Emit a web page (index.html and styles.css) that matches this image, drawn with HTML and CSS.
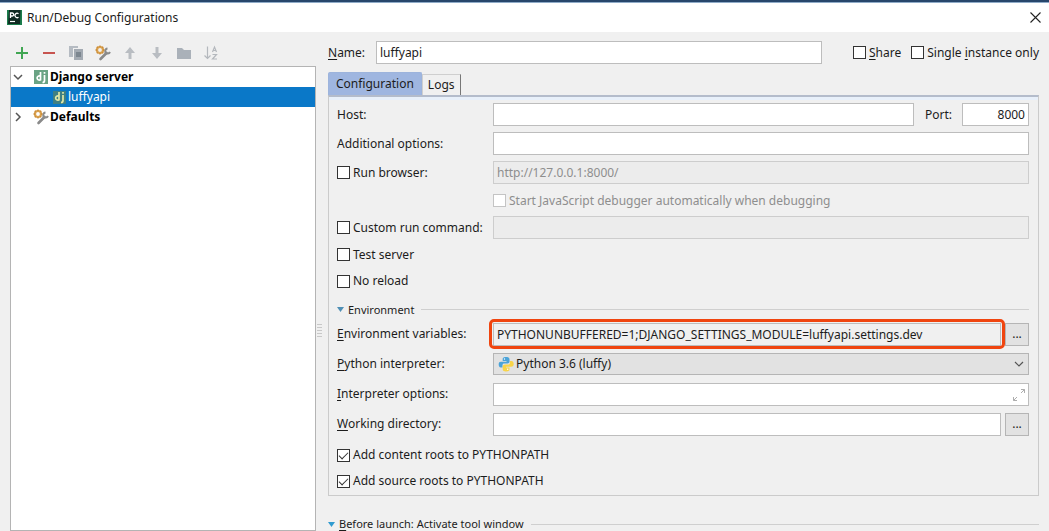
FILE: index.html
```html
<!DOCTYPE html>
<html lang="en">
<head>
<meta charset="utf-8">
<title>Run/Debug Configurations</title>
<link rel="stylesheet" href="styles.css">
</head>
<body>
<svg class="defs" width="0" height="0" aria-hidden="true">
  <symbol id="tools" viewBox="0 0 16 16">
    <path d="M5.500 14 11.500 8" stroke="#8a8a8a" stroke-width="2.600" stroke-linecap="round"/>
    <path d="M12.500 3.500a2.500 2.500 0 1 0 2.500 3.500" stroke="#8b8b8b" stroke-width="2" fill="none"/>
    <circle cx="5" cy="5" r="3" fill="none" stroke="#d9a04c" stroke-width="2.200"/>
    <path d="M5 .5v1.500M5 8v1.500M.5 5H2M8 5h1.500M1.800 1.800l1 1M7.200 7.200l1 1M1.800 8.200l1-1M7.200 2.800l1-1" stroke="#c98a3a" stroke-width="1.300"/>
  </symbol>
</svg>
<div class="dialog">
  <header class="titlebar">
    <svg class="logo" viewBox="0 0 15 15" aria-hidden="true">
      <rect width="15" height="15" fill="#0f2b22"/>
      <path d="M0 0h2L1 15H0zM13.500 0H15v15H0v-1h13z" fill="#1b7d4c"/>
      <path d="M3.500 8V3h1.700a1.500 1.500 0 0 1 0 3H3.500M11.500 3.700a2.200 2.200 0 1 0 0 3.500" fill="none" stroke="#fff" stroke-width="1.300"/>
      <path d="M3 11.500h5" stroke="#fff" stroke-width="1.200"/>
    </svg>
    <h1>Run/Debug Configurations</h1>
    <button class="close" aria-label="Close"><svg viewBox="0 0 11 11"><path d="M.5.5l10 10M10.500.5l-10 10" stroke="#222" stroke-width="1.100"/></svg></button>
  </header>
  <main class="content">
    <aside class="sidebar">
      <div class="toolbar">
        <button aria-label="Add"><svg viewBox="0 0 16 16"><path d="M8 2v12M2 8h12" stroke="#41a653" stroke-width="2"/></svg></button>
        <button aria-label="Remove"><svg viewBox="0 0 16 16"><path d="M2 8h12" stroke="#c75450" stroke-width="2"/></svg></button>
        <button aria-label="Copy"><svg viewBox="0 0 16 16"><path d="M1 1h9v2H5v9H1z" fill="#b5bbc2"/><path d="M6 4h9v11H6z" fill="#a3aab2"/><path d="M8 7h5v5H8z" fill="#7c868f"/></svg></button>
        <button aria-label="Edit defaults"><svg><use href="#tools"/></svg></button>
        <button aria-label="Move up"><svg viewBox="0 0 16 16"><path d="M8 2l5 6H9.500v6h-3V8H3z" fill="#b9bdc2"/></svg></button>
        <button aria-label="Move down"><svg viewBox="0 0 16 16"><path d="M8 14l5-6H9.500V2h-3v6H3z" fill="#b9bdc2"/></svg></button>
        <button aria-label="Create folder"><svg viewBox="0 0 16 16"><path d="M1 3h5l2 2h7v9H1z" fill="#aab1b9"/></svg></button>
        <button aria-label="Sort configurations"><svg viewBox="0 0 16 16"><path d="M4.500 1.500v12M1.500 10.500l3 3 3-3" fill="none" stroke="#b4b8bd" stroke-width="1.200"/><path d="M9.500 7l2-5 2 5M10.200 5.500h2.600M9.500 9.500H13.500L9.500 14H14" fill="none" stroke="#b4b8bd" stroke-width="1.200"/></svg></button>
      </div>
      <ul class="tree">
        <li>
          <svg class="arrow" viewBox="0 0 10 10"><path d="M1 3l4 4 4-4" fill="none" stroke="#555" stroke-width="1.500"/></svg>
          <svg class="icon" viewBox="0 0 16 16"><rect x="1" y="1" width="14" height="14" fill="#6aa384"/><path d="M7.500 3v8.500M7.500 7C3 6 3 12 7.500 11" fill="none" stroke="#fff" stroke-width="1.700"/><path d="M11.500 6v5.500q0 2-2 2M11.500 3v1.700" fill="none" stroke="#fff" stroke-width="1.700"/></svg>
          <b>Django server</b>
        </li>
        <li class="child selected">
          <svg class="icon" viewBox="0 0 16 16"><rect x="2" y="2" width="13" height="13" fill="#3f7f83"/><path d="M8 3v8.500M8 7C3.500 6 3.500 12 8 11" fill="none" stroke="#e1e8a7" stroke-width="1.700"/><path d="M12 6v5.500q0 2-2 2M12 3v1.700" fill="none" stroke="#e1e8a7" stroke-width="1.700"/></svg>
          <span>luffyapi</span>
        </li>
        <li>
          <svg class="arrow" viewBox="0 0 10 10"><path d="M3 1l4 4-4 4" fill="none" stroke="#555" stroke-width="1.500"/></svg>
          <svg class="icon"><use href="#tools"/></svg>
          <b>Defaults</b>
        </li>
      </ul>
    </aside>
    <div class="splitter" aria-hidden="true"><i></i></div>
    <form class="editor">
      <div class="name-row">
        <label for="name"><u>N</u>ame:</label>
        <input id="name" class="field" type="text" value="luffyapi">
        <label class="check"><input type="checkbox"><span><u>S</u>hare</span></label>
        <label class="check"><input type="checkbox"><span>Single <u>i</u>nstance only</span></label>
      </div>
      <div class="tabs" role="tablist">
        <button type="button" class="tab active" role="tab" aria-selected="true">Configuration</button>
        <button type="button" class="tab" role="tab" aria-selected="false">Logs</button>
      </div>
      <section class="panel">
        <div class="row">
          <label class="label" for="host">Host:</label>
          <input id="host" class="field" type="text">
          <label class="port-label" for="port">Port:</label>
          <input id="port" class="field port" type="text" value="8000">
        </div>
        <div class="row">
          <label class="label" for="options">Additional options:</label>
          <input id="options" class="field" type="text">
        </div>
        <div class="row">
          <label class="label check"><input type="checkbox"><span>Run browser:</span></label>
          <input class="field" type="text" aria-label="Browser URL" value="http://127.0.0.1:8000/" disabled>
        </div>
        <div class="row short indent">
          <label class="check muted"><input type="checkbox" disabled><span>Start JavaScript debugger automatically when debugging</span></label>
        </div>
        <div class="row short">
          <label class="label check"><input type="checkbox"><span>Custom run command:</span></label>
          <input class="field" type="text" aria-label="Custom run command" disabled>
        </div>
        <div class="row short"><label class="check"><input type="checkbox"><span>Test server</span></label></div>
        <div class="row tick"><label class="check"><input type="checkbox"><span>No reload</span></label></div>
        <h2 class="group"><svg viewBox="0 0 7 5"><path d="M0 0h7L3.500 5z" fill="#4f8fb5"/></svg>Environment</h2>
        <div class="row">
          <label class="label" for="env"><u>E</u>nvironment variables:</label>
          <span class="marked"><input id="env" class="field readonly" type="text" readonly value="PYTHONUNBUFFERED=1;DJANGO_SETTINGS_MODULE=luffyapi.settings.dev"></span>
          <button type="button" class="browse" aria-label="Edit environment variables">...</button>
        </div>
        <div class="row">
          <label class="label" for="interp"><u>P</u>ython interpreter:</label>
          <span class="combo">
            <svg class="python" viewBox="0 0 16 16" aria-hidden="true"><path d="M8 1C5 1 4.700 2 4.700 3.500V5H8.500v.7H3C1 5.700 .7 7 .7 8.500s.5 3 2.300 3h1.500V9.500C4.500 8 5 7.500 6.500 7.500h3c1 0 2-.7 2-1.700V3.500C11.500 1.500 10 1 8 1z" fill="#4ba3d8"/><path d="M8 15.500c3 0 3.500-1 3.500-2.500v-1.500H8v-.7h5c2 0 2.700-1.200 2.700-2.800S15 5 13.500 5h-1.500v1.500C12 8 11.500 8.500 10 8.500H7C6 8.500 4.700 9.300 4.700 10.500V13c0 1.800 1.300 2.500 3.300 2.500z" fill="#f8d449"/><circle cx="6.500" cy="3" r=".7" fill="#fff"/><circle cx="9.700" cy="13.300" r=".7" fill="#fff"/></svg>
            <select id="interp"><option>Python 3.6 (luffy)</option></select>
            <svg class="chevron" viewBox="0 0 10 10" aria-hidden="true"><path d="M1 3l4 4 4-4" fill="none" stroke="#555" stroke-width="1.200"/></svg>
          </span>
        </div>
        <div class="row">
          <label class="label" for="iopts"><u>I</u>nterpreter options:</label>
          <span class="expandable">
            <input id="iopts" class="field" type="text">
            <svg class="expand" viewBox="0 0 12 12" aria-hidden="true"><path d="M8 .5h3.500V4M11.500.5 8 4M.5 8v3.500H4M.5 11.500 4 8" fill="none" stroke="#adadad"/></svg>
          </span>
        </div>
        <div class="row">
          <label class="label" for="wd"><u>W</u>orking directory:</label>
          <input id="wd" class="field" type="text">
          <button type="button" class="browse" aria-label="Choose directory">...</button>
        </div>
        <div class="paths">
          <div class="row tick"><label class="check"><input type="checkbox" checked><span>Add content roots to PYTHONPATH</span></label></div>
          <div class="row tick"><label class="check"><input type="checkbox" checked><span>Add source roots to PYTHONPATH</span></label></div>
        </div>
      </section>
      <h2 class="group launch"><svg viewBox="0 0 7 5"><path d="M0 0h7L3.500 5z" fill="#2f9bd0"/></svg><span><u>B</u>efore launch: Activate tool window</span></h2>
    </form>
  </main>
</div>
</body>
</html>
```
FILE: styles.css
```css
* { box-sizing: border-box; }
body {
  margin: 0;
  font-family: "Noto Sans", "Open Sans", sans-serif;
  font-size: 12px;
  line-height: 16px;
  color: #1c1c1c;
  background: #f0f0f0;
}
button, input, select { font: inherit; color: inherit; margin: 0; }
svg { display: block; flex: none; }
u { text-underline-offset: 2px; }
.defs { position: absolute; }
.dialog {
  height: 100vh;
  display: flex;
  flex-direction: column;
  overflow: hidden;
  border-top: 2px solid #27466b;
}
.titlebar {
  height: 30px;
  flex: none;
  display: flex;
  align-items: center;
  padding: 0 8px 0 7px;
  border-top: 1px solid #8fabc8;
  background: #fff;
}
.logo { width: 15px; height: 15px; }
h1 { margin: 0 auto 0 5px; font-size: 12px; font-weight: 400; }
.close { border: 0; padding: 0; background: none; }
.close svg { width: 11px; height: 11px; }
.content { flex: 1; min-height: 0; display: flex; padding: 9px 10px 0; }
.sidebar { flex: 0 0 306px; display: flex; flex-direction: column; }
.toolbar { display: flex; gap: 11px; padding: 4px 4px 5px; }
.toolbar button { border: 0; padding: 0; background: none; }
.toolbar svg { width: 16px; height: 16px; }
.tree {
  flex: 1;
  margin: 0;
  padding: 0;
  list-style: none;
  border: 1px solid #b4b4b4;
  background: #fff;
}
.tree li { display: flex; align-items: center; height: 20px; padding-left: 2px; }
.tree li.child { padding-left: 40px; }
.tree b { color: #000; }
.arrow { width: 10px; height: 10px; margin-right: 10px; }
.icon { width: 16px; height: 16px; margin-right: 1px; }
.selected { background: #0a78c8; color: #fff; }
.splitter { flex: 0 0 12px; display: flex; justify-content: center; padding-top: 283px; }
.splitter i { width: 5px; height: 14px; margin-right: 6px; background: repeating-linear-gradient(#c8c8c8 0 1px, #f0f0f0 1px 3px); }
.editor { flex: 1; min-width: 0; display: flex; flex-direction: column; }
.name-row { display: flex; align-items: center; padding-bottom: 8px; }
.name-row > label:first-child { width: 48px; }
.name-row .check:nth-of-type(2) { margin-left: 31px; }
.name-row .check:nth-of-type(3) { margin-left: 10px; }
.field {
  flex: 1;
  min-width: 0;
  width: 100%;
  height: 23px;
  padding: 0 3px;
  border: 1px solid #bdbdbd;
  border-radius: 0;
  background: #fff;
}
.field:disabled { background: #ececec; border-color: #cdcdcd; color: #8e8e8e; }
.field.readonly { background: #f0f0f0; }
.check { display: flex; align-items: center; gap: 3px; white-space: nowrap; }
.check input {
  appearance: none;
  flex: none;
  width: 13px;
  height: 13px;
  border: 1px solid #333;
  background: #fff;
}
.check input:checked { display: grid; place-items: center; }
.check input:checked::before {
  content: "";
  width: 8px;
  height: 4px;
  margin-bottom: 2px;
  border: solid #333;
  border-width: 0 0 1px 1px;
  rotate: -45deg;
}
.muted { color: #8e8e8e; }
.muted input { border-color: #c4c4c4; }
.tabs { display: flex; align-items: flex-end; height: 23px; }
.tab {
  height: 21px;
  padding: 0 5px;
  border: 1px solid #cfcfcf;
  border-right: 1px solid #777;
  border-bottom: 0;
  background: #f0f0f0;
}
.tab.active { height: 23px; padding: 0 7px; border: 1px solid #9db4dc; border-bottom: 0; border-radius: 2px 2px 0 0; background: #9fb6e0; }
.panel {
  padding: 3px 9px 1px 8px;
  border: 1px solid #cbcbcb;
  border-top: 2px solid #b4bccb;
  box-shadow: inset 0 3px #e8f0fa;
}
.row { display: flex; align-items: center; height: 30px; }
.row:nth-child(-n+3) { height: 29px; }
.row.short { height: 27px; }
.row.tick { height: 26px; }
.indent { padding-left: 156px; }
.label { flex: 0 0 156px; }
.port-label { padding: 0 10px 0 11px; }
.port { flex: 0 0 67px; text-align: right; }
.group { display: flex; align-items: center; margin: 0; padding-top: 6px; height: 25px; font-size: 11px; font-weight: 400; }
.group svg { width: 7px; height: 5px; margin-right: 4px; }
.group::after { content: ""; flex: 1; height: 1px; margin-left: 7px; background: #cfcfcf; }
.browse { flex: none; width: 24px; height: 23px; margin-left: 4px; padding: 0; border: 1px solid #b5b5b5; background: #e2e2e2; }
.marked, .combo, .expandable { position: relative; flex: 1; min-width: 0; display: flex; }
.marked::after {
  content: "";
  position: absolute;
  inset: -4px -4px -3px;
  border: 3px solid #f0450f;
  border-radius: 5px;
  pointer-events: none;
}
.combo select { appearance: none; width: 100%; height: 22px; padding: 0 22px; border: 1px solid #b5b5b5; border-radius: 0; background: #e2e2e2; }
.python { position: absolute; left: 5px; top: 3px; width: 16px; height: 16px; }
.chevron { position: absolute; right: 5px; top: 6px; width: 10px; height: 10px; }
.expand { position: absolute; right: 4px; top: 6px; width: 12px; height: 12px; }
.paths { padding-top: 3px; }
.launch { height: 14px; margin-top: 21px; padding: 0; line-height: 14px; }
```
